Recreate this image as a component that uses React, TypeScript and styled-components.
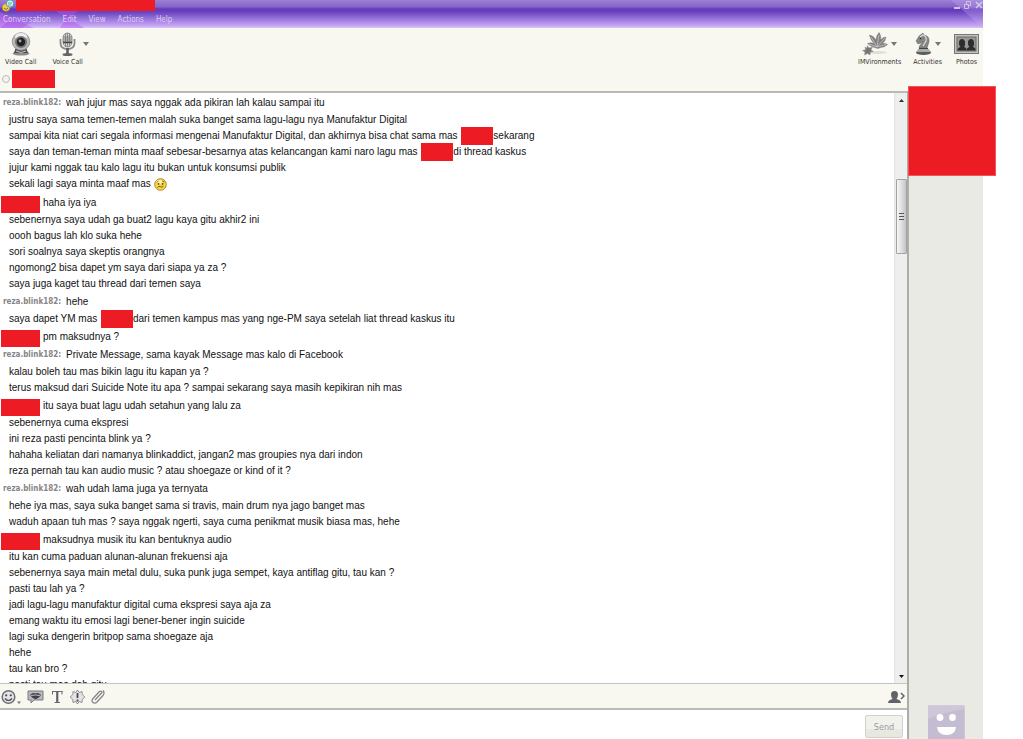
import React from "react";
import styled, { createGlobalStyle } from "styled-components";

const GlobalStyle = createGlobalStyle`
  * { box-sizing: border-box; }
  body { margin: 0; background: #fff; overflow: hidden; }
`;

const uiFont = `"DejaVu Sans Condensed", "DejaVu Sans", sans-serif`;
const red = "#ed1c24";

const Window = styled.div`
  height: 100vh;
  margin-right: 40px;
  display: flex;
  flex-direction: column;
  font-family: ${uiFont};
  background: #f9f8f0;
`;

const TitleArea = styled.header`
  position: relative;
  flex: none;
  height: 28px;
  display: flex;
  flex-direction: column;
  background: linear-gradient(#9b81d4 0, #8562c8 7px, #6239ba 9px, #6a43c0 12px, #c8a8f5 26px, #dcc5fb 28px);
`;

const TitleArt = styled.svg`
  position: absolute;
  inset: 0 auto 0 0;
  &.right { inset: 0 0 0 auto; }
`;

const TitleRow = styled.div`
  position: relative;
  display: flex;
  align-items: flex-start;
  height: 12px;
  padding-left: 2px;
  gap: 2px;
`;

const Redacted = styled.span<{ $w: number; $h: number }>`
  display: inline-block;
  flex: none;
  width: ${(p) => p.$w}px;
  height: ${(p) => p.$h}px;
  background: ${red};
`;

const WindowButtons = styled.div`
  margin-left: auto;
  display: flex;
  gap: 2px;
`;

const WindowButton = styled.button`
  width: 9px;
  height: 11px;
  padding: 0;
  border: 0;
  background: none;
  display: flex;
`;

const MenuBar = styled.nav`
  position: relative;
  display: flex;
  gap: 12px;
  padding-left: 3px;
  height: 16px;
`;

const MenuButton = styled.button`
  padding: 0;
  border: 0;
  background: none;
  color: #dccdf3;
  font: 8px/16px ${uiFont};
`;

const CallBar = styled.div`
  flex: none;
  display: flex;
  justify-content: space-between;
  height: 41px;
  padding: 3px 4px 0 5px;
`;

const ToolGroup = styled.div<{ $gap: number }>`
  display: flex;
  align-items: flex-start;
  gap: ${(p) => p.$gap}px;
`;

const ToolButton = styled.button`
  padding: 0;
  border: 0;
  background: none;
  display: flex;
  flex-direction: column;
  align-items: center;
  color: #333;
  font: 7px/10px ${uiFont};
`;

const ToolIcon = styled.span<{ $hangingArrow?: boolean }>`
  display: flex;
  align-items: center;
  gap: ${(p) => (p.$hangingArrow ? 7 : 3)}px;
  margin-right: ${(p) => (p.$hangingArrow ? -13 : 0)}px;
  height: 26px;
`;

const ContactRow = styled.div`
  flex: none;
  display: flex;
  align-items: center;
  gap: 2px;
  height: 22px;
  padding: 0 0 2px 2px;
`;

const StatusRadio = styled.input`
  appearance: none;
  width: 8px;
  height: 8px;
  margin: 0;
  border: 1px solid #bbb;
  border-radius: 50%;
  background: #f4f3ee;
`;

const Body = styled.div`
  flex: 1;
  min-height: 0;
  display: flex;
`;

const Conversation = styled.main`
  flex: 1;
  min-width: 0;
  display: flex;
  flex-direction: column;
  border-right: 2px solid #acada9;
`;

const History = styled.section`
  flex: 1;
  min-height: 0;
  display: flex;
  background: #fff;
  border-top: 2px solid #b9bab4;
  border-bottom: 1px solid #c4c5bf;
`;

const Messages = styled.div`
  flex: 1;
  min-width: 0;
  padding-top: 1px;
  overflow: hidden;
  color: #111;
  font: 10px/16px "Liberation Sans", Arial, sans-serif;
`;

const FirstLine = styled.p`
  margin: 0;
  padding-left: 3px;
  height: 18px;
  line-height: 18px;
  display: flex;
  align-items: center;
  gap: 5px;
  white-space: nowrap;
`;

const Sender = styled.strong`
  color: #858585;
  font: bold 8px/18px ${uiFont};
`;

const HiddenSender = styled.strong`
  flex: none;
  width: 39px;
  height: 17px;
  margin: 2px -2px 0;
  background: ${red};
`;

const MoreLines = styled.div`
  margin-bottom: 1px;
  padding-left: 9px;
`;

const Line = styled.p`
  margin: 0;
  white-space: nowrap;
`;

const HiddenName = styled.span`
  display: inline-block;
  width: 32px;
  height: 18px;
  margin: -1px 0 -1px 1px;
  vertical-align: top;
  background: ${red};
`;

const Emoticon = styled.svg`
  display: inline-block;
  margin: 2px 0;
  vertical-align: top;
`;

const ScrollTrack = styled.div`
  flex: none;
  width: 13px;
  display: flex;
  flex-direction: column;
  align-items: center;
  background: #eeeeee;
  border-left: 1px solid #e2e2e2;
`;

const ScrollButton = styled.button`
  flex: none;
  width: 12px;
  height: 14px;
  padding: 0;
  border: 0;
  background: none;
  display: flex;
  align-items: center;
  justify-content: center;
`;

const ScrollSpace = styled.div<{ $grow: number }>`
  flex: ${(p) => p.$grow} 0 0;
`;

const ScrollThumb = styled.div`
  flex: none;
  width: 11px;
  height: 75px;
  display: flex;
  align-items: center;
  justify-content: center;
  border: 1px solid #a3a3a3;
  border-radius: 1px;
  background: linear-gradient(90deg, #f6f6f6, #e2e2e3 45%, #c3c4c8);
`;

const FormatBar = styled.div`
  flex: none;
  height: 26px;
  display: flex;
  align-items: center;
  gap: 6px;
  padding: 2px 2px 0 1px;
  border-bottom: 2px solid #bcbdb7;
`;

const FormatButton = styled.button<{ $end?: boolean }>`
  padding: 0;
  border: 0;
  background: none;
  display: flex;
  margin-left: ${(p) => (p.$end ? "auto" : "0")};
`;

const Composer = styled.form`
  flex: none;
  display: flex;
  height: 29px;
  padding: 5px 4px 0 4px;
  background: #fff;
`;

const MessageInput = styled.textarea`
  flex: 1;
  min-width: 0;
  height: 22px;
  padding: 0;
  border: 0;
  outline: 0;
  resize: none;
  font: 10px/16px "Liberation Sans", Arial, sans-serif;
`;

const SendButton = styled.button`
  width: 38px;
  height: 23px;
  padding: 0;
  border: 1px solid #d0d1c8;
  border-radius: 2px;
  background: linear-gradient(#f1f2ec 60%, #e7e9e0 60%);
  color: #9b9b9b;
  font: 9px/20px ${uiFont};
`;

const Sidebar = styled.aside`
  position: relative;
  flex: none;
  width: 74px;
  display: flex;
  flex-direction: column;
  align-items: center;
  justify-content: flex-end;
  background: #e8eae3;
`;

const HiddenPhoto = styled.div`
  position: absolute;
  top: -5px;
  left: -1px;
  width: 88px;
  height: 90px;
  background: ${red};
  border: 1px solid #f0555a;
`;

const Arrow = () => (
  <svg width="6" height="4" viewBox="0 0 6 4"><path d="M0 0h6L3 4z" fill="#74786f" /></svg>
);

type Item = { me?: boolean; lines: React.ReactNode[] };

const Worried = () => (
  <Emoticon width="13" height="13" viewBox="0 0 13 13" role="img" aria-label="worried">
    <circle cx="6.500" cy="6.500" r="5.800" fill="#f7d548" stroke="#b48a20" strokeWidth="1" />
    <ellipse cx="5.500" cy="4" rx="3.500" ry="2" fill="#fff2a0" />
    <path d="M2.500 4.500l2-1.500M8 3l2.500 1" stroke="#7a5a12" strokeWidth=".8" />
    <circle cx="4.500" cy="5.800" r=".9" fill="#54400f" /><circle cx="8.600" cy="5.800" r=".9" fill="#54400f" />
    <path d="M3.500 9.500q1.500-2 3-.8t3-.7" fill="none" stroke="#7a5a12" />
  </Emoticon>
);

const chat: Item[] = [
  { lines: [
    "wah jujur mas saya nggak ada pikiran lah kalau sampai itu",
    "justru saya sama temen-temen malah suka banget sama lagu-lagu nya Manufaktur Digital",
    <>sampai kita niat cari segala informasi mengenai Manufaktur Digital, dan akhirnya bisa chat sama mas <HiddenName />sekarang</>,
    <>saya dan teman-teman minta maaf sebesar-besarnya atas kelancangan kami naro lagu mas <HiddenName />di thread kaskus</>,
    "jujur kami nggak tau kalo lagu itu bukan untuk konsumsi publik",
    <>sekali lagi saya minta maaf mas <Worried /></>,
  ] },
  { me: true, lines: [
    "haha iya iya",
    "sebenernya saya udah ga buat2 lagu kaya gitu akhir2 ini",
    "oooh bagus lah klo suka hehe",
    "sori soalnya saya skeptis orangnya",
    "ngomong2 bisa dapet ym saya dari siapa ya za ?",
    "saya juga kaget tau thread dari temen saya",
  ] },
  { lines: [
    "hehe",
    <>saya dapet YM mas <HiddenName />dari temen kampus mas yang nge-PM saya setelah liat thread kaskus itu</>,
  ] },
  { me: true, lines: ["pm maksudnya ?"] },
  { lines: [
    "Private Message, sama kayak Message mas kalo di Facebook",
    "kalau boleh tau mas bikin lagu itu kapan ya ?",
    "terus maksud dari Suicide Note itu apa ? sampai sekarang saya masih kepikiran nih mas",
  ] },
  { me: true, lines: [
    "itu saya buat lagu udah setahun yang lalu za",
    "sebenernya cuma ekspresi",
    "ini reza pasti pencinta blink ya ?",
    "hahaha keliatan dari namanya blinkaddict, jangan2 mas groupies nya dari indon",
    "reza pernah tau kan audio music ? atau shoegaze or kind of it ?",
  ] },
  { lines: [
    "wah udah lama juga ya ternyata",
    "hehe iya mas, saya suka banget sama si travis, main drum nya jago banget mas",
    "waduh apaan tuh mas ? saya nggak ngerti, saya cuma penikmat musik biasa mas, hehe",
  ] },
  { me: true, lines: [
    "maksudnya musik itu kan bentuknya audio",
    "itu kan cuma paduan alunan-alunan frekuensi aja",
    "sebenernya saya main metal dulu, suka punk juga sempet, kaya antiflag gitu, tau kan ?",
    "pasti tau lah ya ?",
    "jadi lagu-lagu manufaktur digital cuma ekspresi saya aja za",
    "emang waktu itu emosi lagi bener-bener ingin suicide",
    "lagi suka dengerin britpop sama shoegaze aja",
    "hehe",
    "tau kan bro ?",
    "pasti tau mas dah gitu",
  ] },
];

export default function App() {
  return (
    <Window>
      <GlobalStyle />
      <TitleArea>
        <TitleArt width="110" height="28" viewBox="0 0 110 28">
          <path d="M0 12L34 28H0z" fill="#c45cf0" opacity=".5" />
          <path d="M56 11h22L68 18 84 28H60l6-10z" fill="#b94ff5" opacity=".45" />
          <path d="M0 28L20 12l28 0L22 28z" fill="#8e4be6" opacity=".35" />
        </TitleArt>
        <TitleArt className="right" width="40" height="28" viewBox="0 0 40 28">
          <path d="M8 0h32v28z" fill="#c9b0f2" opacity=".3" />
        </TitleArt>
        <TitleRow>
          <svg width="12" height="12" viewBox="0 0 12 12">
            <circle cx="4" cy="7.500" r="3.800" fill="#f3cf45" stroke="#b98b20" strokeWidth=".7" />
            <circle cx="8" cy="3.500" r="3.700" fill="#d6f0f2" stroke="#3d97a8" strokeWidth=".9" />
            <path d="M6 3h4M6 5h3" stroke="#4b8f70" strokeWidth=".8" />
            <path d="M2 8q2 3 4 0" fill="none" stroke="#745712" strokeWidth=".8" />
          </svg>
          <Redacted $w={139} $h={11} />
          <WindowButtons>
            <WindowButton aria-label="Minimize"><svg width="9" height="11"><path d="M2 8h6" stroke="#cfc0ec" strokeWidth="2" /></svg></WindowButton>
            <WindowButton aria-label="Restore"><svg width="9" height="11"><path d="M1.500 4.500h4v4h-4zM3.500 4V1.500h4v4H6" fill="none" stroke="#cfc0ec" /></svg></WindowButton>
            <WindowButton aria-label="Close"><svg width="9" height="11"><path d="M2 2l6 6M8 2L2 8" stroke="#d6c9ef" strokeWidth="1.600" /></svg></WindowButton>
          </WindowButtons>
        </TitleRow>
        <MenuBar>
          {["Conversation", "Edit", "View", "Actions", "Help"].map((m) => <MenuButton key={m}>{m}</MenuButton>)}
        </MenuBar>
      </TitleArea>

      <CallBar>
        <ToolGroup $gap={16}>
          <ToolButton>
            <ToolIcon>
              <svg width="20" height="24" viewBox="0 0 20 24">
                <ellipse cx="10" cy="21.500" rx="8.500" ry="2" fill="#8b8b8b" />
                <path d="M5 15h10l2 6H3z" fill="#4c4c4c" />
                <circle cx="10" cy="9.500" r="8.800" fill="#b9b9b9" stroke="#8c8c8c" strokeWidth=".8" />
                <ellipse cx="10" cy="4.500" rx="6" ry="3.500" fill="#ededed" />
                <circle cx="10" cy="10" r="6" fill="#747474" /><circle cx="10" cy="10" r="4.200" fill="#222" />
                <circle cx="9" cy="9" r="1.400" fill="#a5a5a5" />
                <path d="M5 19q5 3 10 0" fill="none" stroke="#ccc" />
              </svg>
            </ToolIcon>
            Video Call
          </ToolButton>
          <ToolButton>
            <ToolIcon $hangingArrow>
              <svg width="17" height="24" viewBox="0 0 17 24">
                <ellipse cx="8.500" cy="22.500" rx="5" ry="1.500" fill="#666" />
                <path d="M1.500 7v4q0 6 7 6t7-6V7" fill="none" stroke="#8b8b8b" strokeWidth="1.800" />
                <path d="M8.500 16v6" stroke="#5c5c5c" strokeWidth="2.500" />
                <rect x="4" y="1" width="9" height="14" rx="4.500" fill="#d3d3d3" stroke="#7a7a7a" strokeWidth=".8" />
                <path d="M4 5h9M4 7h9M4 9h9" stroke="#777" strokeWidth=".8" />
                <path d="M6.500 1.500v13M8.500 1v14M10.500 1.500v13" stroke="#707070" strokeWidth=".7" />
                <path d="M4 10.500h9" stroke="#444" strokeWidth="1.500" />
              </svg>
              <Arrow />
            </ToolIcon>
            Voice Call
          </ToolButton>
        </ToolGroup>
        <ToolGroup $gap={12}>
          <ToolButton>
            <ToolIcon>
              <svg width="26" height="24" viewBox="0 0 26 24">
                <ellipse cx="16" cy="20.500" rx="9" ry="1.500" fill="#deded8" />
                <path d="M14 16Q9 15 5.500 11.500 9 10 12 11.500 8 7 7.500 3 12 4 14 8 14 4 17 .5 19.500 4 18.500 8 21 5 24 5 23.500 9 20.500 11.500q3-.5 5 1-3 3-7 3-2.500 1.500-4.500.5z" fill="#828282" stroke="#6c6c6c" strokeWidth=".4" />
                <path d="M15 15l2-12M15 15l8-9M15 15L9 5M15 15l-8-3M15 15l9-2.500" stroke="#cfcfcf" strokeWidth=".7" />
                <path d="M5.500 13.500L7 16l3.500-1-1.500 3 2.500 1.500-3 .5-.5 3-2.500-1.500-3 1.500.5-3-2.500-1.500 3-.8-.5-2.700 2 1z" fill="#777" stroke="#999" strokeWidth=".5" />
              </svg>
              <Arrow />
            </ToolIcon>
            IMVironments
          </ToolButton>
          <ToolButton>
            <ToolIcon>
              <svg width="17" height="24" viewBox="0 0 17 24">
                <ellipse cx="8.500" cy="20.500" rx="7.500" ry="2.500" fill="#5b5b5b" />
                <path d="M2 20q0-3 3-4h7q3 1 3 4z" fill="#aaa" />
                <path d="M4 16q0-3 4-5-3 0-5 1L1 9l3-5 4-3 1 2q6 1 5 7l-2 6z" fill="#858585" stroke="#666" strokeWidth=".5" />
                <path d="M5 5l3-2q4 1 3 6L8 14" fill="none" stroke="#ddd" strokeWidth="1.200" />
                <circle cx="5.500" cy="6.500" r=".8" fill="#222" />
                <path d="M4 16.500h9" stroke="#444" />
              </svg>
              <Arrow />
            </ToolIcon>
            Activities
          </ToolButton>
          <ToolButton>
            <ToolIcon>
              <svg width="25" height="20" viewBox="0 0 25 20">
                <rect x=".5" y=".5" width="24" height="19" fill="#c2c2c2" stroke="#777" />
                <rect x="3" y="3" width="19" height="14" fill="#999" stroke="#696969" />
                <path d="M3.500 16.500q0-3 3-3.500-2-2-1.500-5T8 5t3 3-1 5q3 1 2.500 3.500z" fill="#2d2d2d" />
                <path d="M12.500 16.500q0-3 3-3.500-2-2-1.500-5T17 5t3 3-1 5q3 1 2.500 3.500z" fill="#2d2d2d" />
              </svg>
            </ToolIcon>
            Photos
          </ToolButton>
        </ToolGroup>
      </CallBar>
      <ContactRow>
        <StatusRadio type="radio" aria-label="Contact" />
        <Redacted $w={43} $h={18} />
      </ContactRow>

      <Body>
        <Conversation>
          <History>
            <Messages>
              {chat.map((item, i) => (
                <article key={i}>
                  <FirstLine>
                    {item.me ? <HiddenSender /> : <Sender>reza.blink182:</Sender>}
                    {item.lines[0]}
                  </FirstLine>
                  {item.lines.length > 1 && (
                    <MoreLines>
                      {item.lines.slice(1).map((line, j) => <Line key={j}>{line}</Line>)}
                    </MoreLines>
                  )}
                </article>
              ))}
            </Messages>
            <ScrollTrack>
              <ScrollButton aria-label="Scroll up"><svg width="5" height="3"><path d="M0 3h5L2.500 0z" fill="#333" /></svg></ScrollButton>
              <ScrollSpace $grow={72} />
              <ScrollThumb><svg width="5" height="7"><path d="M0 .5h5M0 3.500h5M0 6.500h5" stroke="#555" /></svg></ScrollThumb>
              <ScrollSpace $grow={416} />
              <ScrollButton aria-label="Scroll down"><svg width="5" height="3"><path d="M0 0h5L2.500 3z" fill="#111" /></svg></ScrollButton>
            </ScrollTrack>
          </History>

          <FormatBar>
            <FormatButton aria-label="Emoticons">
              <svg width="20" height="16" viewBox="0 0 20 16">
                <circle cx="7.500" cy="8" r="6.300" fill="#e4e4e6" stroke="#6f6f78" strokeWidth="1.500" />
                <circle cx="5.200" cy="6.300" r="1.100" fill="#4c4c55" /><circle cx="9.800" cy="6.300" r="1.100" fill="#4c4c55" />
                <path d="M4 9.500q3.500 4 7 0" fill="none" stroke="#4c4c55" strokeWidth="1.200" />
                <path d="M16 12.500h4l-2 2.500z" fill="#777" />
              </svg>
            </FormatButton>
            <FormatButton aria-label="Audibles">
              <svg width="17" height="16" viewBox="0 0 17 16">
                <path d="M1 2h15v9H7l-3 3v-3H1z" fill="#b8b8be" stroke="#7b7b84" />
                <path d="M3 6q3-3 5.500-1.500Q11 3 14 6q-3 4-5.500 4T3 6z" fill="#3f3f48" />
                <path d="M4 6.500q4.500-1 9 0" stroke="#ddd" strokeWidth=".8" fill="none" />
              </svg>
            </FormatButton>
            <FormatButton aria-label="Text format">
              <svg width="14" height="16" viewBox="0 0 14 16">
                <path d="M2 2.500h10.500M2.500 2v3.500M12 2v3.500M4.500 13.500h5.500" fill="none" stroke="#6b6b75" />
                <path d="M7.250 2.500v11" stroke="#62626c" strokeWidth="2.200" />
              </svg>
            </FormatButton>
            <FormatButton aria-label="Buzz">
              <svg width="15" height="16" viewBox="0 0 15 16">
                <path d="M7.500 1l1.700 2.500L12 2.500l.3 3 2.400 2.500-2.400 2.500-.3 3-2.800-1L7.500 15l-1.700-2.500-2.800 1-.3-3L.3 8l2.400-2.500.3-3 2.800 1z" fill="#e4e4e7" stroke="#85858d" strokeWidth=".9" />
                <path d="M7.500 4v5M7.500 10.500v2" stroke="#484850" strokeWidth="1.800" />
              </svg>
            </FormatButton>
            <FormatButton aria-label="Attach file">
              <svg width="14" height="16" viewBox="0 0 14 16">
                <path d="M4 11l6-6.500q1.500-1 .5-2T8 3L2 9.500Q0 12 2 13.500t4-.5l6-6.500q2-3 0-5" fill="none" stroke="#85858d" strokeWidth="1.300" />
              </svg>
            </FormatButton>
            <FormatButton $end aria-label="Add people">
              <svg width="17" height="14" viewBox="0 0 17 14">
                <path d="M0 13q0-3 4.500-4Q3 7 3 4.500 3 1 6.500 1T10 4.500Q10 7 8.500 9q4.500 1 4.500 4z" fill="#62626b" />
                <path d="M13 3l3 3-3 3" fill="none" stroke="#62626b" strokeWidth="1.500" />
              </svg>
            </FormatButton>
          </FormatBar>

          <Composer onSubmit={(e) => e.preventDefault()}>
            <MessageInput aria-label="Message" />
            <SendButton type="submit">Send</SendButton>
          </Composer>
        </Conversation>
        <Sidebar>
          <HiddenPhoto />
          <svg width="37" height="34" viewBox="0 0 37 34" role="img" aria-label="Avatar">
            <path d="M0 0h37v34H0z" fill="#c4bcd0" />
            <path d="M0 0h37v4Q20 6 0 14z" fill="#cec7d8" />
            <path d="M0 0h37v34" fill="none" stroke="#d6d0de" />
            <circle cx="12" cy="12.500" r="3.400" fill="#fff" /><circle cx="24.500" cy="12.500" r="3.400" fill="#fff" />
            <path d="M9 22h19q-1 8-9.500 8T9 22z" fill="#fff" />
          </svg>
        </Sidebar>
      </Body>
    </Window>
  );
}
